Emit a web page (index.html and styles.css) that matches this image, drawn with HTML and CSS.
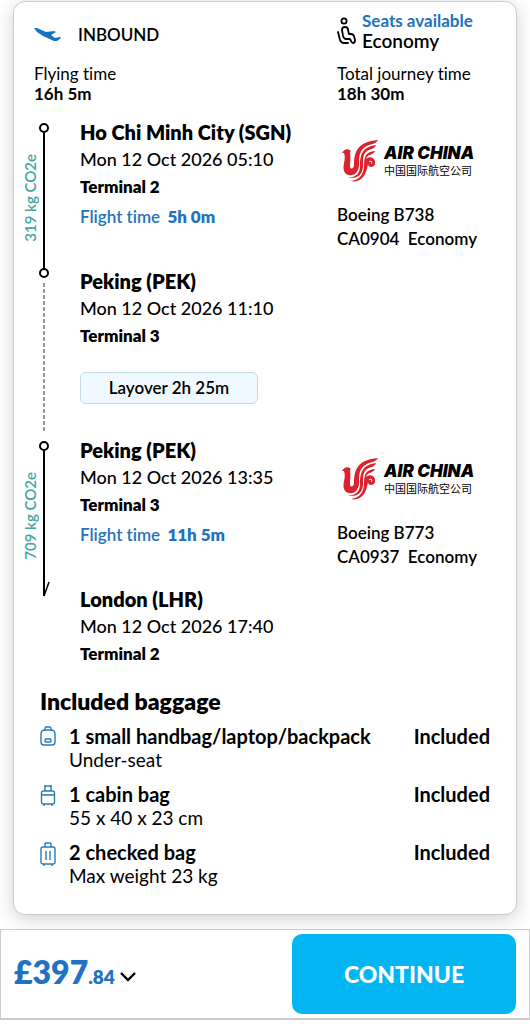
FILE: index.html
```html
<!DOCTYPE html>
<html lang="en">
<head>
    <meta charset="utf-8">
    <meta name="viewport" content="width=device-width, initial-scale=1">
    <title>Inbound flight</title>
    <link rel="stylesheet" href="styles.css">
</head>
<body>

<!-- Shared logo mark -->
<svg class="defs" width="0" height="0" aria-hidden="true">
    <symbol id="phoenix" viewBox="0 0 36 44">
        <path d="M0 14 C2 10 6 9 9 12 L8 13 C9 18 8 23 8 27 C8 31 12 30 12 26 C12 12 16 3 36 1 C34 5 29 5 25 7 C17 11 17 17 17 27 C16 34 12 37 7 36 C1 35 1 29 2 24 C3 20 3 17 2 14 Z" fill="#d9232e"/>
        <path d="M34 6 C33 10 28 10 25 12 C21 15 21 19 21 27 C21 36 14 41 6 38 C13 39 18 35 18 27 C18 16 20 8 34 6 Z" fill="#d9232e"/>
        <path d="M33 12 C32 16 25 15 24 20 C29 16 34 20 33 25 C32 29 26 29 26 25 C24 38 18 44 9 42 C18 41 22 34 22 27 C22 18 23 13 33 12 Z" fill="#d9232e"/>
        <path d="M27 23 C29 21 31 23 29 25" fill="none" stroke="#fff"/>
    </symbol>
</svg>

<main class="card">
    <!-- Summary -->
    <div class="summary">
        <div class="direction">
            <svg class="plane" width="28" height="16" viewBox="0 0 28 16">
                <path d="M0 1 L3 1 L12 5 L20 4 L22 5 L17 8 L21 11 L26 10 L27 11 L23 14 L20 14 L9 9 L3 5 Z" fill="#1672c4"/>
            </svg>
            <h2>INBOUND</h2>
        </div>
        <div class="cabin">
            <svg class="seat" width="20" height="28" viewBox="0 0 20 28" fill="none" stroke="#000" stroke-width="1.8" stroke-linecap="round" stroke-linejoin="round">
                <circle cx="7" cy="4" r="2.6"/>
                <path d="M1 15 L3 23 Q4 26 7 26 H11"/>
                <path d="M5 13 Q5 10 8 10 Q11 10 11 13 L12 17 H14 Q16 17 17 19 L18 23 Q18 26 16 26 Q15 26 14 24 L13 22 H9 Q7 22 6 19 Z"/>
            </svg>
            <div>
                <p class="seats">Seats available</p>
                <p class="cabin-name">Economy</p>
            </div>
        </div>
        <div class="time">
            <p>Flying time</p>
            <strong>16h 5m</strong>
        </div>
        <div class="time">
            <p>Total journey time</p>
            <strong>18h 30m</strong>
        </div>
    </div>

    <!-- Journey -->
    <div class="leg">
        <p class="co2">319 kg CO2e</p>
        <div class="rail">
            <span class="node"></span>
            <span class="line"></span>
        </div>
        <div class="stop">
            <h3>Ho Chi Minh City (SGN)</h3>
            <p class="date">Mon 12 Oct 2026 05:10</p>
            <p class="terminal">Terminal 2</p>
            <p class="duration">Flight time <strong>5h 0m</strong></p>
        </div>
        <div class="airline">
            <div class="logo">
                <svg width="36" height="44"><use href="#phoenix"/></svg>
                <div>
                    <p class="logo-name">AIR CHINA</p>
                    <p class="logo-local" lang="zh">中国国际航空公司</p>
                </div>
            </div>
            <p>Boeing B738</p>
            <p>CA0904 &nbsp;Economy</p>
        </div>
    </div>

    <div class="leg">
        <div class="rail rail-wait">
            <span class="node"></span>
            <span class="line dashed"></span>
        </div>
        <div class="stop">
            <h3>Peking (PEK)</h3>
            <p class="date">Mon 12 Oct 2026 11:10</p>
            <p class="terminal">Terminal 3</p>
            <p class="layover">Layover 2h 25m</p>
        </div>
    </div>

    <div class="leg">
        <p class="co2">709 kg CO2e</p>
        <div class="rail">
            <span class="node"></span>
            <span class="line"></span>
        </div>
        <div class="stop">
            <h3>Peking (PEK)</h3>
            <p class="date">Mon 12 Oct 2026 13:35</p>
            <p class="terminal">Terminal 3</p>
            <p class="duration">Flight time <strong>11h 5m</strong></p>
        </div>
        <div class="airline">
            <div class="logo">
                <svg width="36" height="44"><use href="#phoenix"/></svg>
                <div>
                    <p class="logo-name">AIR CHINA</p>
                    <p class="logo-local" lang="zh">中国国际航空公司</p>
                </div>
            </div>
            <p>Boeing B773</p>
            <p>CA0937 &nbsp;Economy</p>
        </div>
    </div>

    <div class="leg">
        <div class="rail rail-end">
            <svg class="arrow" width="14" height="12" viewBox="0 0 14 12" fill="none" stroke="#000" stroke-width="2">
                <path d="M7 0 V10"/>
                <path d="M7 10 L12 -4" stroke-width="1.5"/>
            </svg>
        </div>
        <div class="stop">
            <h3>London (LHR)</h3>
            <p class="date">Mon 12 Oct 2026 17:40</p>
            <p class="terminal">Terminal 2</p>
        </div>
    </div>

    <!-- Baggage -->
    <section class="baggage">
        <h2>Included baggage</h2>
        <ul>
            <li>
                <svg width="16" height="24" viewBox="0 0 16 24" fill="none" stroke="#2a7ab8" stroke-width="1.4">
                    <path d="M5 5 V3 Q5 1 6 1 H10 Q11 1 11 3 V5"/>
                    <path d="M1 8 Q1 4 5 4 H11 Q15 4 15 8 V16 Q15 19 12 19 H4 Q1 19 1 16 Z"/>
                    <rect x="5" y="13" width="6" height="3" rx="1"/>
                </svg>
                <div>
                    <p class="bag">1 small handbag/laptop/backpack</p>
                    <p>Under-seat</p>
                </div>
                <p class="bag">Included</p>
            </li>
            <li>
                <svg width="16" height="24" viewBox="0 0 16 24" fill="none" stroke="#2a7ab8" stroke-width="1.4">
                    <path d="M4 2 H12 M5 2 V7 M11 2 V7"/>
                    <rect x="1.5" y="7" width="13" height="13" rx="2"/>
                    <path d="M2 11 H14 M4 20 V22 M12 20 V22"/>
                </svg>
                <div>
                    <p class="bag">1 cabin bag</p>
                    <p>55 x 40 x 23 cm</p>
                </div>
                <p class="bag">Included</p>
            </li>
            <li>
                <svg width="16" height="24" viewBox="0 0 16 24" fill="none" stroke="#2a7ab8" stroke-width="1.4">
                    <path d="M5 5 V2 Q5 1 6 1 H10 Q11 1 11 2 V5"/>
                    <rect x="1" y="5" width="14" height="17" rx="2"/>
                    <path d="M6 9 V18 M10 9 V18 M4 22 V24 M12 22 V24"/>
                </svg>
                <div>
                    <p class="bag">2 checked bag</p>
                    <p>Max weight 23 kg</p>
                </div>
                <p class="bag">Included</p>
            </li>
        </ul>
    </section>
</main>

<!-- Price bar -->
<footer class="pay-bar">
    <button class="price" type="button">
        <span class="pounds">£397</span><span class="pence">.84</span>
        <svg width="16" height="12" viewBox="0 0 16 12" fill="none" stroke="#000" stroke-width="2.4">
            <path d="M1 1 L8 8 L15 1"/>
        </svg>
    </button>
    <button class="continue" type="button">CONTINUE</button>
</footer>

</body>
</html>
```
FILE: styles.css
```css
* {
    box-sizing: border-box;
}
body {
    margin: 0;
    font-family: Lato, "Noto Sans CJK SC", sans-serif;
    font-size: 17px;
    font-variant-ligatures: none;
    line-height: 20px;
    color: #000;
    background-color: #fff;
}
h2, h3, p, ul {
    margin: 0;
    padding: 0;
}
.defs {
    position: absolute;
}
.card {
    margin: 1px 13px 14px;
    padding: 9px 20px 26px;
    border: 1px solid #ccc;
    border-radius: 12px;
    background-color: #fff;
    box-shadow: 0 4px 18px rgba(0, 0, 0, 0.18);
}

/* Summary */
.summary {
    display: grid;
    grid-template-columns: 1fr 159px;
    row-gap: 13px;
}
.direction, .cabin {
    display: flex;
    align-items: center;
}
.direction {
    gap: 16px;
    padding-top: 8px;
}
.direction h2 {
    font-size: 17px;
    font-weight: 600;
}
.cabin {
    gap: 5px;
}
.seats {
    font-weight: bold;
    color: #2272bd;
}
.cabin-name {
    font-size: 19px;
    font-weight: 600;
}

/* Journey */
.leg {
    display: grid;
    grid-template-columns: 46px 1fr 159px;
}
.summary + .leg {
    margin-top: 15px;
}
.rail {
    grid-area: 1 / 1;
    width: 20px;
    display: flex;
    flex-direction: column;
    align-items: center;
    padding-top: 4px;
}
.rail-wait {
    padding-top: 0;
}
.rail-end {
    padding-top: 0;
}
.node {
    width: 10px;
    height: 10px;
    border: 2px solid #000;
    border-radius: 50%;
}
.line {
    flex: 1;
    border-left: 2px solid #000;
}
.dashed {
    width: 2px;
    margin: 5px 0;
    border: none;
    background: repeating-linear-gradient(#999 0 4px, #fff 4px 6px);
}
.arrow {
    overflow: visible;
}
.co2 {
    grid-area: 1 / 1;
    align-self: center;
    width: 20px;
    margin-left: -14px;
    padding-bottom: 8px;
    writing-mode: vertical-rl;
    transform: rotate(180deg);
    font-size: 15px;
    font-weight: 600;
    color: #46a6a0;
}
.stop {
    grid-area: 1 / 2;
    line-height: 27px;
}
.stop h3 {
    font-size: 20px;
    font-weight: 800;
    white-space: nowrap;
}
.date {
    font-size: 18px;
    font-weight: 500;
    white-space: nowrap;
}
.terminal {
    font-weight: 800;
}
.duration {
    margin: 3px 0 38px;
    font-weight: 600;
    color: #2272bd;
}
.duration strong {
    margin-left: 3px;
    font-weight: 800;
}
.layover {
    width: 178px;
    margin: 23px 0 33px;
    border: 1px solid #c5dcdf;
    border-radius: 6px;
    background-color: #f0f9ff;
    line-height: 30px;
    text-align: center;
    font-weight: 600;
}
.airline {
    grid-area: 1 / 3;
    font-weight: 600;
    line-height: 24px;
}
.logo {
    display: flex;
    align-items: center;
    gap: 6px;
    margin: 20px 0 20px 5px;
    height: 44px;
    white-space: nowrap;
}
.logo-name {
    font-family: Inter, sans-serif;
    font-size: 17px;
    font-weight: 900;
    font-style: italic;
    line-height: 18px;
}
.logo-local {
    font-family: "Noto Sans CJK SC", sans-serif;
    font-size: 11px;
    font-weight: normal;
    line-height: 16px;
}

/* Baggage */
.baggage {
    padding: 22px 6px 0;
    font-size: 19px;
    line-height: 24px;
}
.baggage h2 {
    font-size: 23px;
    font-weight: 800;
}
.baggage ul {
    display: grid;
    gap: 10px;
    margin-top: 11px;
    list-style: none;
}
.baggage li {
    display: grid;
    grid-template-columns: 16px 1fr auto;
    column-gap: 13px;
}
.baggage svg {
    margin-top: 2px;
}
.bag {
    font-size: 20px;
    font-weight: bold;
}

/* Price bar */
.pay-bar {
    position: relative;
    display: flex;
    justify-content: space-between;
    align-items: center;
    padding: 4px 13px;
    border: 1px solid #ccc;
    border-bottom-width: 2px;
    background-color: #fff;
}
button {
    font-family: inherit;
    border: none;
    cursor: pointer;
}
.price {
    display: flex;
    align-items: baseline;
    padding: 0 0 6px;
    background: none;
    color: #2272c4;
    font-weight: 800;
}
.pounds {
    font-size: 32px;
}
.pence {
    font-size: 19px;
}
.price svg {
    margin-left: 5px;
}
.continue {
    width: 224px;
    height: 80px;
    border-radius: 10px;
    background-color: #02b5f3;
    color: #fff;
    font-size: 23px;
    font-weight: 900;
}
```
